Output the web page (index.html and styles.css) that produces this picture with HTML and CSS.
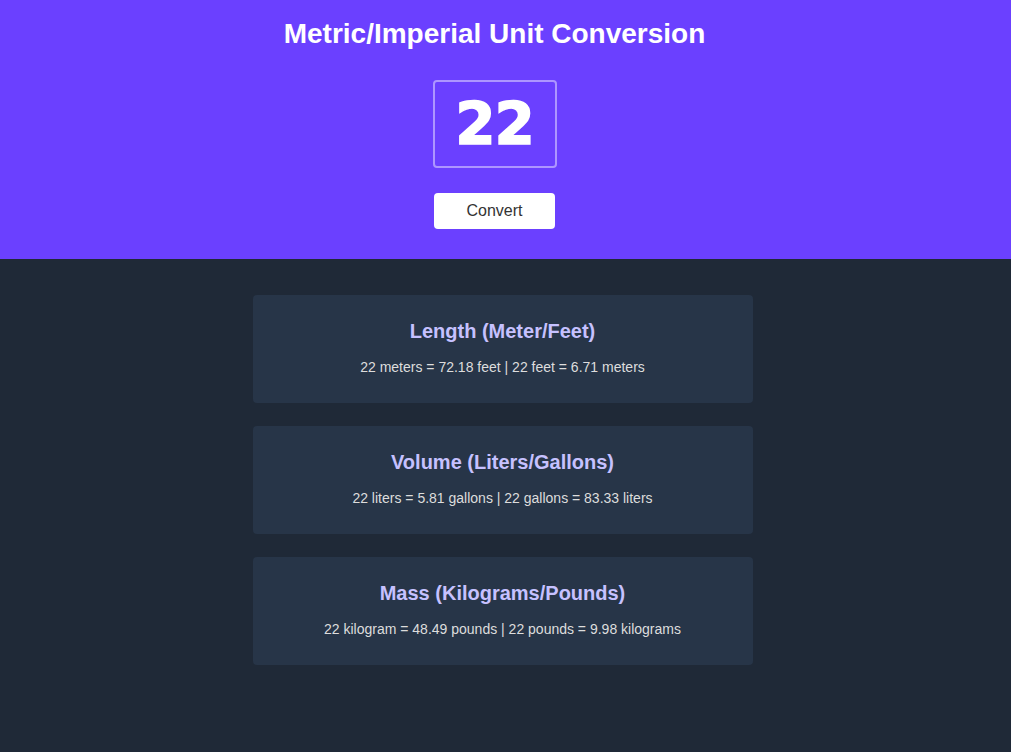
FILE: index.html
```html
<!DOCTYPE html>
<html lang="en">
<head>
<meta charset="utf-8">
<title>Metric/Imperial Unit Conversion</title>
<link rel="stylesheet" href="styles.css">
</head>
<body>
  <header class="hero">
    <h1 class="hero-title">Metric/Imperial Unit Conversion</h1>
    <input class="num-input" type="text" value="22">
    <button class="convert-btn">Convert</button>
  </header>
  <main class="results">
    <section class="card">
      <h2 class="card-title">Length (Meter/Feet)</h2>
      <p class="card-text">22 meters = 72.18 feet | 22 feet = 6.71 meters</p>
    </section>
    <section class="card">
      <h2 class="card-title">Volume (Liters/Gallons)</h2>
      <p class="card-text">22 liters = 5.81 gallons | 22 gallons = 83.33 liters</p>
    </section>
    <section class="card">
      <h2 class="card-title">Mass (Kilograms/Pounds)</h2>
      <p class="card-text">22 kilogram = 48.49 pounds | 22 pounds = 9.98 kilograms</p>
    </section>
  </main>
</body>
</html>
```

FILE: styles.css
```css
* { box-sizing: border-box; }
html, body { margin: 0; padding: 0; }
body {
  font-family: "Liberation Sans", Arial, sans-serif;
  background: #1f2937;
  min-height: 100vh;
}
.hero {
  background: #6b40ff;
  display: flex;
  flex-direction: column;
  align-items: center;
  padding: 18px 22px 30px 0;
}
.hero-title {
  margin: 0;
  color: #fff;
  font-size: 28px;
  line-height: 32px;
  font-weight: 700;
}
.num-input {
  margin-top: 30px;
  width: 124px;
  height: 88px;
  background: transparent;
  border: 2px solid rgba(255,255,255,0.45);
  border-radius: 4px;
  color: #fff;
  -webkit-text-stroke: 1.5px #fff;
  font-family: "DejaVu Sans", "Liberation Sans", sans-serif;
  font-size: 58px;
  font-weight: 700;
  letter-spacing: -1px;
  text-align: center;
  padding: 0;
  outline: none;
}
.convert-btn {
  margin-top: 25px;
  width: 121px;
  height: 36px;
  background: #fff;
  border: none;
  border-radius: 4px;
  color: #333;
  font-family: "Liberation Sans", Arial, sans-serif;
  font-size: 16px;
  cursor: pointer;
}
.results {
  display: flex;
  flex-direction: column;
  align-items: center;
  gap: 23px;
  padding: 36px 6px 0 0;
}
.card {
  width: 500px;
  height: 108px;
  background: #273548;
  border-radius: 4px;
  text-align: center;
  padding: 24px 20px 0;
}
.card-title {
  margin: 0;
  color: #c6c1ff;
  font-size: 20px;
  line-height: 24px;
  font-weight: 700;
}
.card-text {
  margin: 16px 0 0;
  color: #dddddd;
  font-size: 14px;
  line-height: 16px;
}
```
